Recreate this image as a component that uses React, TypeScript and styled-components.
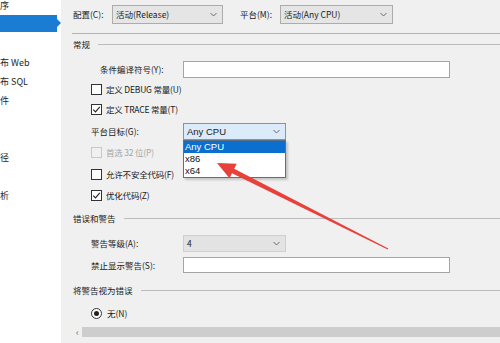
import React from "react";
import styled, { createGlobalStyle, css } from "styled-components";

const GlobalStyle = createGlobalStyle`
  html, body {
    margin: 0;
    padding: 0;
    background: #f0f0f0;
  }
  body {
    width: 500px;
    height: 343px;
    overflow: hidden;
    font-family: "Noto Sans CJK SC", "Noto Sans", sans-serif;
    font-size: 8.5px;
    color: #1a1a1a;
  }
`;

const Page = styled.div`
  position: relative;
  display: flex;
  width: 500px;
  height: 343px;
  overflow: hidden;
`;

const Sidebar = styled.div`
  width: 61px;
  flex-shrink: 0;
  background: #fff;
  display: flex;
  flex-direction: column;
  font-size: 9px;
`;

const NavItem = styled.div<{ $selected?: boolean }>`
  position: relative;
  height: 19px;
  display: flex;
  align-items: center;
  white-space: nowrap;
  color: #1e1e1e;
  &:first-child {
    margin-top: -4px;
  }
  ${(p) =>
    p.$selected &&
    css`
      &::before {
        content: "";
        position: absolute;
        left: 0;
        top: 0;
        width: 57px;
        height: 17px;
        background: #1b7cd3;
      }
      &::after {
        content: "";
        position: absolute;
        left: 57px;
        top: 4px;
        border-top: 4.5px solid transparent;
        border-bottom: 4.5px solid transparent;
        border-left: 4px solid #1b7cd3;
      }
    `}
`;

const Main = styled.div`
  flex: 1;
  display: flex;
  flex-direction: column;
  padding-left: 12px;
`;

const ConfigBar = styled.div`
  height: 28px;
  display: flex;
  align-items: center;
`;

const BarLabel = styled.span<{ $w: number; $ml?: number }>`
  width: ${(p) => p.$w}px;
  margin-left: ${(p) => p.$ml ?? 0}px;
  flex-shrink: 0;
`;

const Select = styled.div<{ $w: number; $h?: number; $variant?: "gray" | "focus" | "dim" }>`
  position: relative;
  width: ${(p) => p.$w}px;
  height: ${(p) => p.$h ?? 17}px;
  box-sizing: border-box;
  display: flex;
  align-items: center;
  justify-content: space-between;
  padding: 0 5px 0 3px;
  border: 1px solid #acacac;
  background: #e5e5e5;
  flex-shrink: 0;
  ${(p) =>
    p.$variant === "focus" &&
    css`
      border-color: #5a9fe0;
      background: #dcebf9;
      font-family: "Liberation Sans", Arial, sans-serif;
      font-size: 9.5px;
    `}
  ${(p) =>
    p.$variant === "dim" &&
    css`
      border-color: #cfcfcf;
      background: #e3e3e3;
    `}
`;

const Chevron = () => (
  <svg width="7" height="5" viewBox="0 0 7 5">
    <polyline points="0.5,1 3.5,4 6.5,1" fill="none" stroke="#6a6a6a" strokeWidth="1" />
  </svg>
);

const Separator = styled.div`
  margin-top: 5px;
  margin-left: -1px;
  height: 1px;
  background: #b4b4b4;
`;

const SectionHeader = styled.div<{ $mt?: number }>`
  height: 20px;
  margin-top: ${(p) => p.$mt ?? 0}px;
  display: flex;
  align-items: center;
  gap: 8px;
  &::after {
    content: "";
    flex: 1;
    height: 1px;
    background: #bdbdbd;
  }
`;

const Row = styled.div<{ $mt?: number; $indent?: number }>`
  position: relative;
  height: 20px;
  margin-top: ${(p) => p.$mt ?? 0}px;
  padding-left: ${(p) => p.$indent ?? 18}px;
  display: flex;
  align-items: center;
`;

const FieldLabel = styled.span<{ $w: number }>`
  width: ${(p) => p.$w}px;
  flex-shrink: 0;
`;

const TextInput = styled.div<{ $h?: number }>`
  width: 267px;
  height: ${(p) => p.$h ?? 17}px;
  box-sizing: border-box;
  border: 1px solid #a5a5a5;
  background: #fff;
`;

const Box = styled.span<{ $disabled?: boolean }>`
  width: 11px;
  height: 11px;
  box-sizing: border-box;
  border: 1px solid ${(p) => (p.$disabled ? "#c8c8c8" : "#333")};
  background: ${(p) => (p.$disabled ? "#f0f0f0" : "#fff")};
  margin-right: 4px;
  display: flex;
  align-items: center;
  justify-content: center;
  flex-shrink: 0;
`;

const CheckText = styled.span<{ $disabled?: boolean }>`
  color: ${(p) => (p.$disabled ? "#a6a6a6" : "#1a1a1a")};
  letter-spacing: -0.2px;
`;

const Check = ({ checked, disabled, label }: { checked?: boolean; disabled?: boolean; label: string }) => (
  <>
    <Box $disabled={disabled}>
      {checked && (
        <svg width="9" height="9" viewBox="0 0 9 9">
          <polyline points="1.2,4.6 3.5,6.9 7.8,1.8" fill="none" stroke="#222" strokeWidth="1.1" />
        </svg>
      )}
    </Box>
    <CheckText $disabled={disabled}>{label}</CheckText>
  </>
);

const Radio = styled.span`
  width: 11px;
  height: 11px;
  box-sizing: border-box;
  border: 1px solid #333;
  border-radius: 50%;
  background: #fff;
  margin-right: 5px;
  display: flex;
  align-items: center;
  justify-content: center;
  &::after {
    content: "";
    width: 5px;
    height: 5px;
    border-radius: 50%;
    background: #222;
  }
`;

const DropWrap = styled.div`
  position: relative;
`;

const DropList = styled.div`
  position: absolute;
  left: 0;
  top: 17px;
  width: 103px;
  box-sizing: border-box;
  border: 1px solid #5b6f86;
  background: #fff;
  box-shadow: 2px 2px 2px rgba(0, 0, 0, 0.18);
  z-index: 2;
`;

const DropItem = styled.div<{ $active?: boolean }>`
  height: 12px;
  line-height: 12px;
  padding-left: 1px;
  font-family: "Liberation Sans", Arial, sans-serif;
  font-size: 9.5px;
  background: ${(p) => (p.$active ? "#0a6fcf" : "#fff")};
  color: ${(p) => (p.$active ? "#fff" : "#111")};
`;

const ScrollBar = styled.div`
  margin-top: 4px;
  margin-left: 3px;
  height: 10px;
  display: flex;
  align-items: center;
  gap: 1px;
`;

const ScrollThumb = styled.div`
  flex: 1;
  height: 10px;
  background: #cdcdcd;
`;

const ScrollArrow = styled.span`
  font-size: 9px;
  color: #606060;
  width: 5px;
`;

const Overlay = styled.svg`
  position: absolute;
  left: 0;
  top: 0;
  pointer-events: none;
  z-index: 5;
`;

const navItems = ["序", "", "", "布 Web", "布 SQL", "件", "", "", "径", "", "析"];

const App = () => {
  return (
    <Page>
      <GlobalStyle />
      <Sidebar>
        {navItems.map((t, i) => (
          <NavItem key={i} $selected={i === 1}>
            {t}
          </NavItem>
        ))}
      </Sidebar>
      <Main>
        <ConfigBar>
          <BarLabel $w={39}>配置(C):</BarLabel>
          <Select $w={111} $h={19}>
            <span>活动(Release)</span>
            <Chevron />
          </Select>
          <BarLabel $w={40} $ml={17}>平台(M):</BarLabel>
          <Select $w={113} $h={19}>
            <span>活动(Any CPU)</span>
            <Chevron />
          </Select>
        </ConfigBar>
        <Separator />
        <SectionHeader>常规</SectionHeader>
        <Row $mt={5} $indent={27}>
          <FieldLabel $w={83}>条件编译符号(Y):</FieldLabel>
          <TextInput />
        </Row>
        <Row>
          <Check label="定义 DEBUG 常量(U)" />
        </Row>
        <Row>
          <Check checked label="定义 TRACE 常量(T)" />
        </Row>
        <Row $mt={2}>
          <FieldLabel $w={92}>平台目标(G):</FieldLabel>
          <DropWrap>
            <Select $w={103} $variant="focus">
              <span>Any CPU</span>
              <Chevron />
            </Select>
            <DropList>
              <DropItem $active>Any CPU</DropItem>
              <DropItem>x86</DropItem>
              <DropItem>x64</DropItem>
            </DropList>
          </DropWrap>
        </Row>
        <Row $mt={1}>
          <Check disabled label="首选 32 位(P)" />
        </Row>
        <Row $mt={2}>
          <Check label="允许不安全代码(F)" />
        </Row>
        <Row $mt={1}>
          <Check checked label="优化代码(Z)" />
        </Row>
        <SectionHeader $mt={3}>错误和警告</SectionHeader>
        <Row $mt={5}>
          <FieldLabel $w={92}>警告等级(A):</FieldLabel>
          <Select $w={103} $variant="dim">
            <span>4</span>
            <Chevron />
          </Select>
        </Row>
        <Row $mt={2}>
          <FieldLabel $w={92}>禁止显示警告(S):</FieldLabel>
          <TextInput $h={16} />
        </Row>
        <SectionHeader $mt={5}>将警告视为错误</SectionHeader>
        <Row $mt={3}>
          <Radio />
          <span>无(N)</span>
        </Row>
        <ScrollBar>
          <ScrollArrow>‹</ScrollArrow>
          <ScrollThumb />
        </ScrollBar>
      </Main>
      <Overlay width="500" height="343" viewBox="0 0 500 343">
        <polygon
          points="217,163 236.7,163.8 234.2,168.8 388.3,248.5 387.7,249.5 232,173.2 229.5,178.2"
          fill="#e8413b"
        />
      </Overlay>
    </Page>
  );
};

export default App;
